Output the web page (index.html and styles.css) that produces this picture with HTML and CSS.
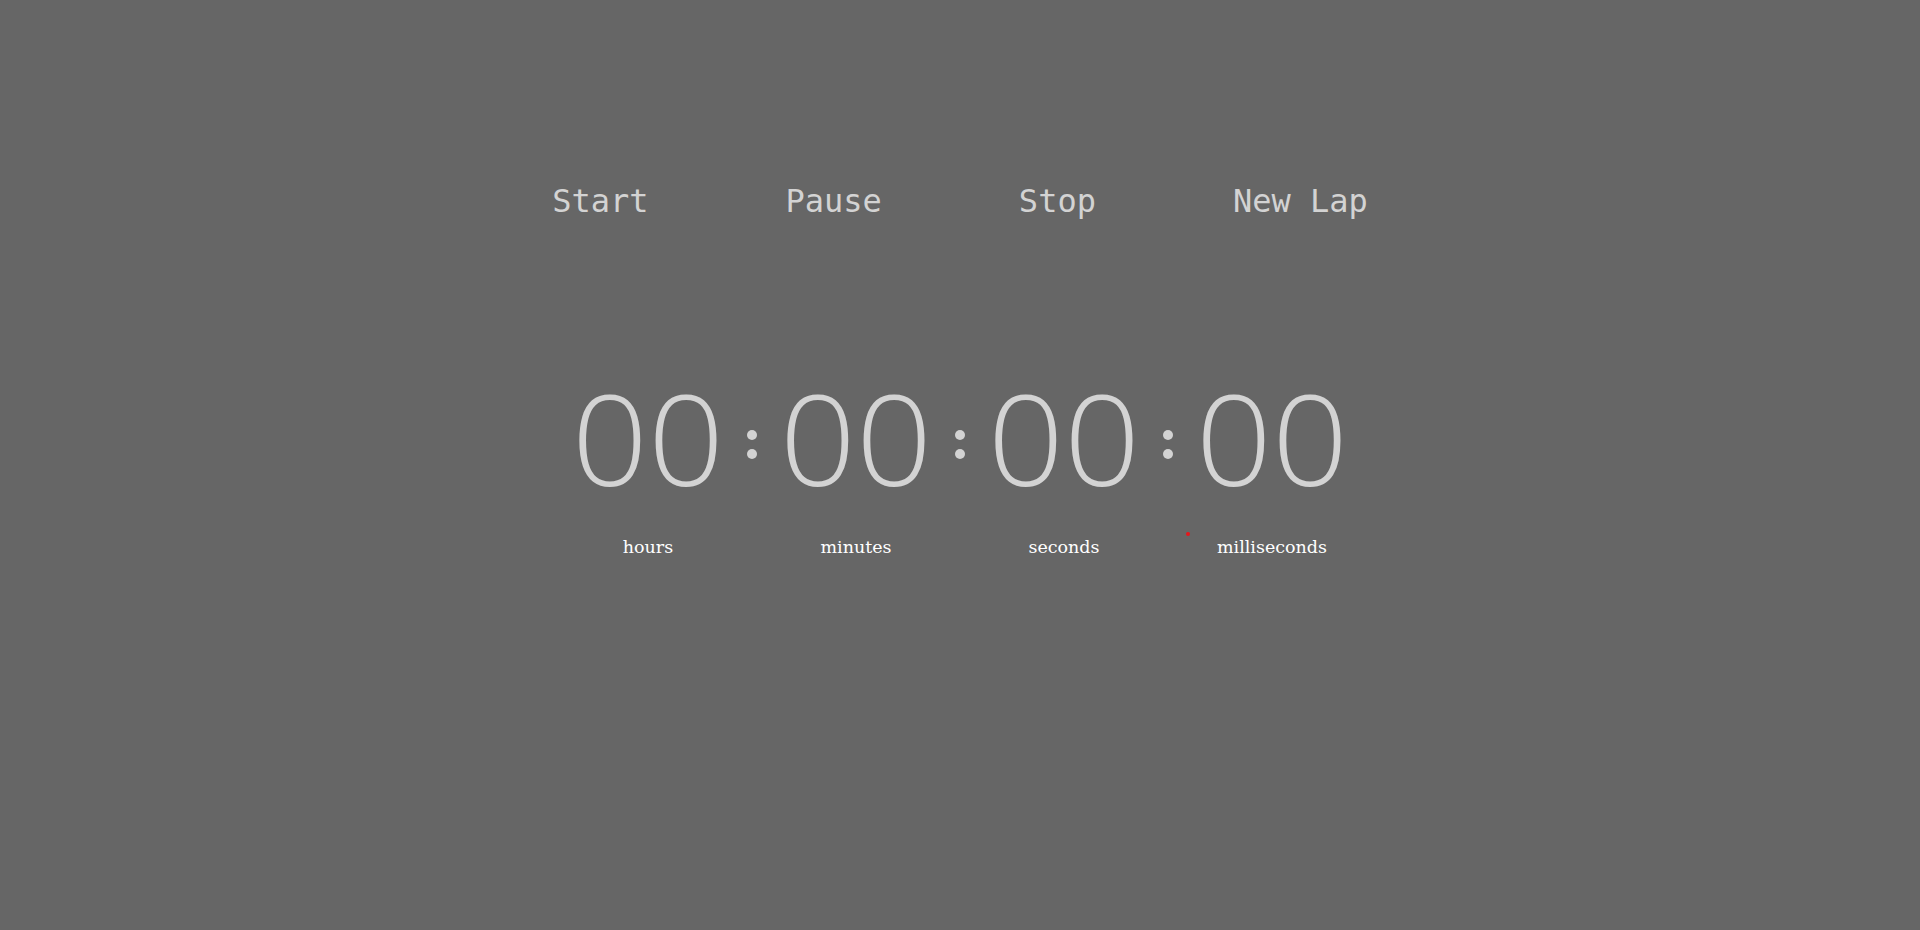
FILE: index.html
```html
<!DOCTYPE html>
<html lang="en">
<head>
<meta charset="utf-8">
<title>Stopwatch</title>
<link rel="stylesheet" href="styles.css">
</head>
<body>
<main class="page">
  <nav class="controls">
    <button class="control">Start</button>
    <button class="control">Pause</button>
    <button class="control">Stop</button>
    <button class="control">New Lap</button>
  </nav>
  <section class="timer">
    <div class="unit">
      <span class="digits">00</span>
      <span class="label">hours</span>
    </div>
    <span class="sep">:</span>
    <div class="unit">
      <span class="digits">00</span>
      <span class="label">minutes</span>
    </div>
    <span class="sep">:</span>
    <div class="unit">
      <span class="digits">00</span>
      <span class="label">seconds</span>
    </div>
    <span class="sep">:</span>
    <div class="unit unit-ms">
      <span class="marker"></span>
      <span class="digits">00</span>
      <span class="label">milliseconds</span>
    </div>
  </section>
</main>
</body>
</html>
```

FILE: styles.css
```css
html, body {
  margin: 0;
  padding: 0;
  background: #666666;
  height: 100%;
}

.page {
  display: flex;
  flex-direction: column;
  align-items: center;
  padding-top: 181px;
}

.controls {
  display: flex;
  gap: 137px;
}

.control {
  background: transparent;
  border: 0;
  padding: 0;
  margin: 0;
  font-family: "DejaVu Sans Mono", "Liberation Mono", monospace;
  font-size: 32px;
  line-height: 40px;
  color: #d3d3d3;
  cursor: pointer;
}

.timer {
  display: flex;
  align-items: flex-start;
  margin-top: 153px;
}

.unit {
  position: relative;
  width: 144px;
  display: flex;
  flex-direction: column;
  align-items: center;
}

.digits {
  font-family: "Open Sans", sans-serif;
  font-weight: 300;
  font-size: 126px;
  line-height: 126px;
  color: #d3d3d3;
  transform: scaleX(1.06);
}

.label {
  margin-top: 37px;
  font-family: "DejaVu Serif", serif;
  font-size: 17.5px;
  line-height: 20px;
  color: #ffffff;
}

.sep {
  position: relative;
  width: 64px;
  height: 126px;
  font-family: "Open Sans", sans-serif;
  font-size: 40px;
  line-height: 126px;
  text-align: center;
  color: transparent;
}

.sep::before,
.sep::after {
  content: "";
  position: absolute;
  left: 27px;
  width: 10px;
  height: 10px;
  border-radius: 50%;
  background: #d3d3d3;
}

.sep::before {
  top: 56px;
}

.sep::after {
  top: 75px;
}

.marker {
  position: absolute;
  left: -14px;
  top: 158px;
  width: 4px;
  height: 4px;
  border-radius: 50%;
  background: #e8161b;
}
```
